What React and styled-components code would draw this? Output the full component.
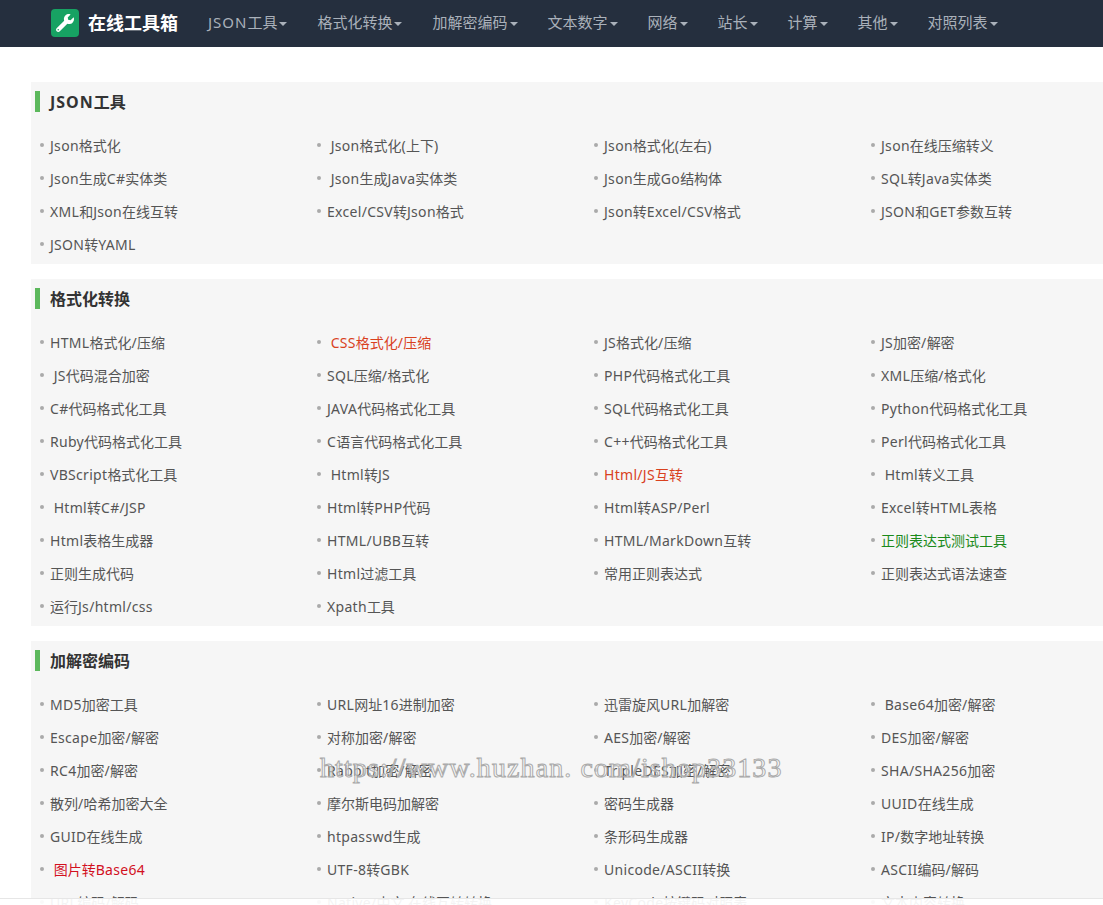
import React from 'react';
import styled, { createGlobalStyle } from 'styled-components';
import { FaWrench } from 'react-icons/fa';

const GlobalStyle = createGlobalStyle`
    html, body {
        margin: 0;
        padding: 0;
        height: 100%;
        overflow: hidden;
        background: #fff;
    }
    body {
        font-family: "Noto Sans", "Noto Sans CJK SC", sans-serif;
        font-size: 14px;
        color: #555;
    }
`
const Nav = styled.nav`
    display: flex;
    align-items: center;
    height: 47px;
    background-color: #252f3e;
    padding-left: 51px;
`
const Brand = styled.a`
    display: flex;
    align-items: center;
    gap: 9px;
    width: 142px;
    padding-bottom: 1px;
    color: #fff;
    font-size: 18px;
    font-weight: 700;
`
const BrandIcon = styled.span`
    display: flex;
    align-items: center;
    justify-content: center;
    width: 28px;
    height: 28px;
    border-radius: 4px;
    background-color: #17a263;
    color: #fff;
    font-size: 18px;
`
const BrandName = styled.span`
    padding-bottom: 3px;
`
const NavItem = styled.a`
    display: flex;
    align-items: center;
    padding: 0 15px 4px;
    color: #aab1ba;
    font-size: 15px;
    white-space: nowrap;
`
const Caret = styled.span`
    width: 0;
    height: 0;
    margin: 4px 0 0 2px;
    border-top: 4px solid #aab1ba;
    border-left: 4px solid transparent;
    border-right: 4px solid transparent;
`
const Latin = styled.span`
    letter-spacing: ${props => (props.$wide ? '1px' : '0.3px')};
`
const Main = styled.main`
    position: relative;
    padding: 35px 0 0 31px;
`
const Section = styled.section`
    background-color: #f6f6f6;
    padding: 9px 0 3px 4px;
    margin-bottom: 15px;
`
const Heading = styled.h2`
    height: 21px;
    margin: 0 0 17px;
    padding-left: 10px;
    border-left: 5px solid #5cb85c;
    color: #333;
    font-size: 16px;
    font-weight: 700;
    line-height: 23px;
`
const List = styled.ul`
    display: grid;
    grid-template-columns: repeat(4, 277px);
    margin: 0;
    padding: 0;
    list-style: none;
`
const Item = styled.li`
    display: flex;
    align-items: center;
    box-sizing: border-box;
    height: 33px;
    padding: 0 0 2px 5px;
    white-space: pre;
    color: ${props => props.$tone || '#555'};
    &::before {
        content: "";
        width: 4px;
        height: 4px;
        margin-right: 6px;
        border-radius: 50%;
        background-color: #aaa;
    }
`
const Watermark = styled.div`
    position: absolute;
    left: 320px;
    top: 705px;
    font-family: "Liberation Serif", serif;
    font-size: 28px;
    letter-spacing: 1.1px;
    line-height: 32px;
    white-space: pre;
    color: rgba(255, 255, 255, 0.5);
    -webkit-text-stroke: 1px #aaa;
    pointer-events: none;
`
const Footer = styled.div`
    position: fixed;
    left: 0;
    right: 0;
    bottom: 0;
    height: 6px;
    border-top: 1px solid #e6e6e6;
    background-color: rgba(255, 255, 255, 0.93);
`

const RED = '#d9411e';
const GREEN = '#1a8a1a';
const CRIMSON = '#d2101e';

const menu = ['JSON工具', '格式化转换', '加解密编码', '文本数字', '网络', '站长', '计算', '其他', '对照列表'];

const sections = [
    {
        title: 'JSON工具',
        items: [
            'Json格式化', ' Json格式化(上下)', 'Json格式化(左右)', 'Json在线压缩转义',
            'Json生成C#实体类', ' Json生成Java实体类', 'Json生成Go结构体', 'SQL转Java实体类',
            'XML和Json在线互转', 'Excel/CSV转Json格式', 'Json转Excel/CSV格式', 'JSON和GET参数互转',
            'JSON转YAML',
        ],
    },
    {
        title: '格式化转换',
        items: [
            'HTML格式化/压缩', { text: ' CSS格式化/压缩', tone: RED }, 'JS格式化/压缩', 'JS加密/解密',
            ' JS代码混合加密', 'SQL压缩/格式化', 'PHP代码格式化工具', 'XML压缩/格式化',
            'C#代码格式化工具', 'JAVA代码格式化工具', 'SQL代码格式化工具', 'Python代码格式化工具',
            'Ruby代码格式化工具', 'C语言代码格式化工具', 'C++代码格式化工具', 'Perl代码格式化工具',
            'VBScript格式化工具', ' Html转JS', { text: 'Html/JS互转', tone: RED }, ' Html转义工具',
            ' Html转C#/JSP', 'Html转PHP代码', 'Html转ASP/Perl', 'Excel转HTML表格',
            'Html表格生成器', 'HTML/UBB互转', 'HTML/MarkDown互转', { text: '正则表达式测试工具', tone: GREEN },
            '正则生成代码', 'Html过滤工具', '常用正则表达式', '正则表达式语法速查',
            '运行Js/html/css', 'Xpath工具',
        ],
    },
    {
        title: '加解密编码',
        items: [
            'MD5加密工具', 'URL网址16进制加密', '迅雷旋风URL加解密', ' Base64加密/解密',
            'Escape加密/解密', '对称加密/解密', 'AES加密/解密', 'DES加密/解密',
            'RC4加密/解密', 'Rabbit加密/解密', 'TripleDES加密/解密', 'SHA/SHA256加密',
            '散列/哈希加密大全', '摩尔斯电码加解密', '密码生成器', 'UUID在线生成',
            'GUID在线生成', 'htpasswd生成', '条形码生成器', 'IP/数字地址转换',
            { text: ' 图片转Base64', tone: CRIMSON }, 'UTF-8转GBK', 'Unicode/ASCII转换', 'ASCII编码/解码',
            'URL编码/解码', 'Native/中文 在线互转转换', 'KeyCode按键码对照表', '文本内容转换',
        ],
    },
];

// the reference's latin glyphs run a bit wider than Noto Sans, the CJK ones don't
const spaced = (text, wide) =>
    text.split(/([\x21-\x7e]+)/).map((part, i) =>
        i % 2 ? <Latin key={i} $wide={wide}>{part}</Latin> : part
    );

const App = () => {
    return (
        <>
            <GlobalStyle />
            <Nav>
                <Brand>
                    <BrandIcon><FaWrench /></BrandIcon>
                    <BrandName>在线工具箱</BrandName>
                </Brand>
                {menu.map(name => (
                    <NavItem key={name}><span>{spaced(name, true)}</span><Caret /></NavItem>
                ))}
            </Nav>
            <Main>
                {sections.map(section => (
                    <Section key={section.title}>
                        <Heading>{spaced(section.title, true)}</Heading>
                        <List>
                            {section.items.map(item => {
                                const text = item.text || item;
                                return <Item key={text} $tone={item.tone}><span>{spaced(text)}</span></Item>;
                            })}
                        </List>
                    </Section>
                ))}
                <Watermark>https://www.huzhan. com/ishop33133</Watermark>
            </Main>
            <Footer />
        </>
    );
};

export default App;
